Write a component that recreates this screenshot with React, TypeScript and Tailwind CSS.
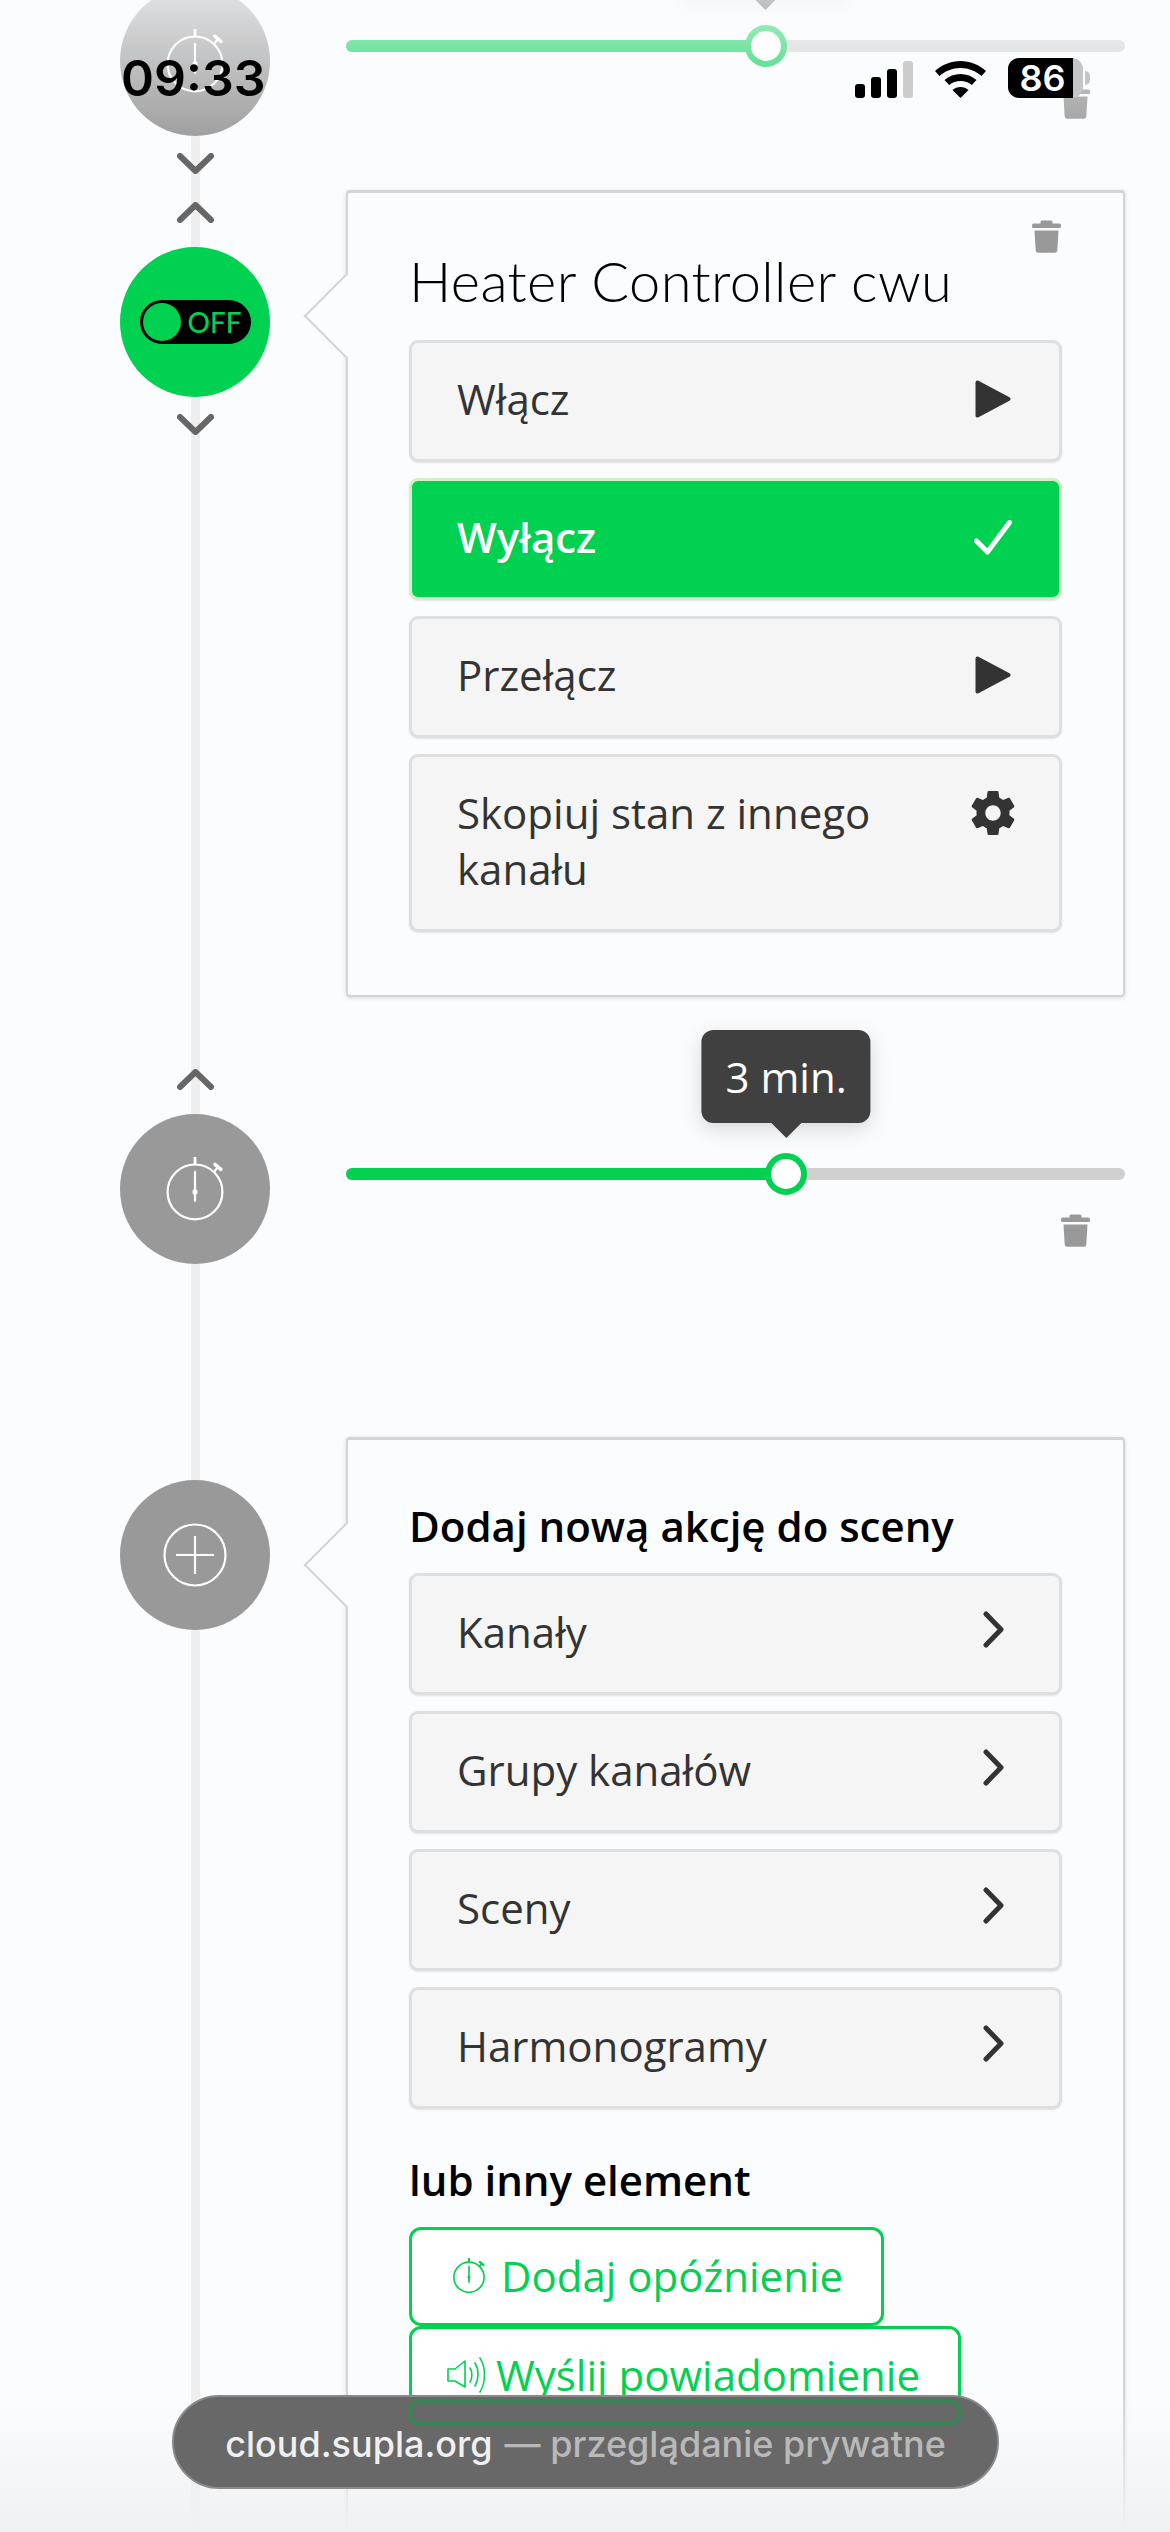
const sans = "font-['Open_Sans',sans-serif]";

function Chevron({ up = false }: { up?: boolean }) {
  return (
    <svg width="37" height="21" viewBox="0 0 37 21" fill="none" stroke="#666666" strokeWidth="6" strokeLinecap="round" strokeLinejoin="round" className="relative shrink-0">
      <polyline points={up ? "3 18 18.5 3 34 18" : "3 3 18.5 18 34 3"} />
    </svg>
  );
}

function Stopwatch({ size = 58, color = "#ffffff", width = 2.2 }: { size?: number; color?: string; width?: number }) {
  return (
    <svg width={size} height={size * 1.1} viewBox="0 0 58 64" fill="none" stroke={color} strokeWidth={width} strokeLinecap="round">
      <circle cx="29" cy="35" r="27.5" />
      <line x1="29" y1="1" x2="29" y2="7" strokeWidth={width + 0.6} />
      <line x1="29" y1="15" x2="29" y2="44" />
      <circle cx="29" cy="35" r="2.6" fill={color} stroke="none" />
      <line x1="48" y1="15" x2="52" y2="10" />
      <line x1="49" y1="7.5" x2="55" y2="12.5" strokeWidth={width + 1.4} />
    </svg>
  );
}

function Trash({ className = "" }: { className?: string }) {
  return (
    <svg width="29" height="33" viewBox="0 0 29 33" fill="#999999" className={className}>
      <path d="M10 0.5h9a1.5 1.5 0 0 1 1.5 1.5v1.5h6.5a2 2 0 0 1 2 2v1a1.5 1.5 0 0 1-1.5 1.5h-26a1.5 1.5 0 0 1-1.5-1.5v-1a2 2 0 0 1 2-2h6.500v-1.500a1.500 1.500 0 0 1 1.500-1.500z" />
      <path d="M2.500 10.500h24l-1.200 20a2.500 2.500 0 0 1-2.500 2.300h-16.600a2.500 2.500 0 0 1-2.500-2.300z" />
    </svg>
  );
}

function Play() {
  return (
    <svg width="36" height="38" viewBox="0 0 36 38" fill="#333333" stroke="#333333" strokeWidth="4" strokeLinejoin="round">
      <polygon points="2.500 2.500 33.500 19 2.500 35.500" />
    </svg>
  );
}

function Check() {
  return (
    <svg width="38" height="35" viewBox="0 0 38 35" fill="none" stroke="#ffffff" strokeWidth="5" strokeLinecap="round" strokeLinejoin="round">
      <polyline points="2.500 21 13.500 32 35.500 2.500" />
    </svg>
  );
}

function Gear() {
  return (
    <svg width="44" height="44" viewBox="2.500 2 19 20" fill="#333333">
      <path d="M19.430 12.980c.04-.32.07-.64.07-.98s-.03-.66-.07-.98l2.110-1.650c.19-.15.240-.42.120-.64l-2-3.460c-.12-.22-.39-.3-.61-.22l-2.490 1c-.52-.4-1.080-.73-1.690-.98l-.38-2.650C14.460 2.180 14.250 2 14 2h-4c-.25 0-.46.18-.49.42l-.38 2.650c-.61.25-1.170.59-1.690.98l-2.490-1c-.23-.09-.49 0-.61.22l-2 3.460c-.13.22-.07.49.12.64l2.110 1.650c-.04.32-.07.65-.07.98s.03.66.07.98l-2.110 1.650c-.19.15-.24.42-.12.64l2 3.460c.12.22.39.3.61.22l2.490-1c.52.4 1.080.73 1.690.98l.38 2.650c.03.24.24.42.49.42h4c.25 0 .46-.18.49-.42l.38-2.650c.61-.25 1.170-.59 1.690-.98l2.490 1c.23.09.49 0 .61-.22l2-3.460c.12-.22.07-.49-.12-.64l-2.110-1.650zM12 15.500c-1.930 0-3.500-1.570-3.500-3.500s1.570-3.500 3.500-3.500 3.500 1.570 3.500 3.500-1.570 3.500-3.500 3.500z" />
    </svg>
  );
}

function ChevronRight() {
  return (
    <svg width="21" height="37" viewBox="0 0 21 37" fill="none" stroke="#333333" strokeWidth="5" strokeLinecap="round" strokeLinejoin="round" className="-mt-[6px]">
      <polyline points="3 3 18 18.500 3 34" />
    </svg>
  );
}

function Speaker() {
  return (
    <svg width="38" height="36" viewBox="0 0 38 36" fill="none" stroke="#00d151" strokeWidth="1.600" strokeLinecap="round" strokeLinejoin="round">
      <polygon points="1 12 8 12 18 4 18 30 8 24 1 24" />
      <path d="M23 11c2.500 4 2.500 10 0 14" />
      <path d="M28 6c4 6.500 4 16 0 23" />
      <path d="M33 1c6 9 6 24 0 34" />
    </svg>
  );
}

function ActionButton({ label, icon, active = false }: { label: string; icon: React.ReactNode; active?: boolean }) {
  return (
    <div
      className={`flex items-start justify-between rounded-[9px] border-[3px] pb-[32px] pl-[45px] pr-[44px] pt-[28px] text-[42px] leading-[56px] shadow-[0_1px_2px_rgba(0,0,0,0.1)] ${
        active ? "border-[#d3efc9] bg-[#00d151] font-semibold text-white" : "border-[#dedfe0] bg-[#f5f5f5] text-[#333333]"
      }`}
    >
      <span className="w-[470px]">{label}</span>
      <span className="flex h-[56px] w-[44px] items-center justify-center">{icon}</span>
    </div>
  );
}

function Card({ notchTop, children }: { notchTop: string; children: React.ReactNode }) {
  return (
    <div className="relative w-[779px] rounded-[4px] border-2 border-t-[3px] border-[#d3d4d6] bg-[#fbfcfe] px-[61px] shadow-[0_1px_4px_rgba(0,0,0,0.15)]">
      <div className={`absolute left-[-32px] h-[60px] w-[60px] rotate-45 border-b-2 border-l-2 border-[#d3d4d6] bg-[#fbfcfe] ${notchTop}`} />
      <div className="relative">{children}</div>
    </div>
  );
}

function DelaySlider({ percent, label }: { percent: number; label: string }) {
  return (
    <div className="relative h-[12px] w-[779px] rounded-full bg-[#d0d0d0]">
      <div className="h-[12px] rounded-full bg-[#00d151]" style={{ width: `${percent}%` }} />
      <div className="absolute top-[-15px] h-[42px] w-[42px] -translate-x-1/2 rounded-full border-[6px] border-[#00d151] bg-white" style={{ left: `${percent}%` }} />
      <div className="absolute bottom-[42px] flex -translate-x-1/2 flex-col items-center" style={{ left: `${percent}%` }}>
        <div className="rounded-[12px] bg-[#404040] px-[24px] py-[18px] text-[42px] leading-[57px] whitespace-nowrap text-white shadow-[0_6px_20px_rgba(0,0,0,0.15)]">{label}</div>
        <div className="h-0 w-0 border-x-[15px] border-t-[15px] border-x-transparent border-t-[#404040]" />
      </div>
    </div>
  );
}

function Circle({ className = "", children }: { className?: string; children: React.ReactNode }) {
  return <div className={`relative flex h-[150px] w-[150px] shrink-0 items-center justify-center rounded-full ${className}`}>{children}</div>;
}

function OutlineButton({ icon, label, className }: { icon: React.ReactNode; label: string; className: string }) {
  return (
    <div className={`flex h-[99px] w-fit items-center rounded-[12px] border-[3px] border-[#00d151] bg-white pb-[2px] pr-[38px] text-[42px] text-[#00d151] ${className}`}>
      {icon}
      <span>{label}</span>
    </div>
  );
}

function StatusBar() {
  return (
    <div className="absolute left-0 top-[50px] flex h-[56px] w-[1170px] items-center justify-between pl-[121px] pr-[80px] text-black">
      <span className="font-['Inter',sans-serif] text-[50px] font-semibold leading-none">09:33</span>
      <div className="flex items-center">
        <svg width="58" height="37" viewBox="0 0 58 37" className="mt-[2px]">
          <rect x="0" y="23" width="10" height="14" rx="3" />
          <rect x="16" y="16" width="10" height="21" rx="3" />
          <rect x="32" y="8" width="10" height="29" rx="3" />
          <rect x="48" y="0" width="10" height="37" rx="3" fill="#cccccc" />
        </svg>
        <svg width="51" height="37" viewBox="0 0 51 37" className="ml-[22px] mt-[2px]">
          <path d="M25.500 0C16 0 7 3.700 0 10l4.500 5C10 10 17.500 7 25.500 7s15.500 3 21 8l4.500-5C44 3.700 35 0 25.500 0z" />
          <path d="M25.500 13c-6 0-11.500 2.200-16 6l4.700 5c3-2.600 7-4 11.300-4s8.300 1.400 11.300 4l4.700-5c-4.500-3.800-10-6-16-6z" />
          <path d="M25.500 26c-3 0-5.700 1-8 3l8 8 8-8c-2.300-2-5-3-8-3z" />
        </svg>
        <div className="relative ml-[22px] flex h-[40px] w-[75px] items-center overflow-hidden rounded-[11px] bg-[#c4c5c6] font-['Inter',sans-serif] text-[36px] font-semibold leading-none text-white">
          <div className="flex h-full w-[65px] items-center justify-center bg-black pl-[4px]">86</div>
        </div>
        <div className="ml-[2px] h-[14px] w-[5px] rounded-r-full bg-[#c4c5c6]" />
      </div>
    </div>
  );
}

export default function App() {
  return (
    <div className={`relative h-[2532px] w-[1170px] overflow-hidden bg-[#fbfcfe] ${sans}`}>
      <div className="absolute bottom-0 left-[191px] top-0 w-[9px] bg-[#eeeeee]" />

      <div className="relative -mt-[14px] pl-[120px]">
        {/* first delay, half hidden under the status bar */}
        <div className="flex h-[204px] gap-[76px]">
          <div className="flex w-[150px] flex-col items-center gap-[17px]">
            <Circle className="bg-[#999999]">
              <Stopwatch />
            </Circle>
            <Chevron />
          </div>
          <div className="flex flex-col pt-[54px]">
            <DelaySlider percent={53.9} label="3 min." />
            <Trash className="mr-[35px] mt-[34px] self-end" />
          </div>
        </div>

        {/* channel action */}
        <div className="flex h-[805px] gap-[76px]">
          <div className="flex w-[150px] flex-col items-center pt-[12px]">
            <Chevron up />
            <Circle className="mb-[17px] mt-[24px] bg-[#00d151]">
              <div className="flex h-[44px] w-[111px] items-center rounded-full bg-black pl-[3px]">
                <div className="h-[38px] w-[38px] rounded-full bg-[#00d151]" />
                <span className="ml-[7px] font-['Lato',sans-serif] text-[28px] font-medium leading-none text-[#00d151]">OFF</span>
              </div>
            </Circle>
            <Chevron />
          </div>
          <div className="h-[805px]">
            <Card notchTop="top-[93px]">
              <Trash className="absolute right-[1px] top-[27px]" />
              <div className="pb-[63px] pt-[56px]">
                <h2 className="mb-[27px] font-['Lato',sans-serif] text-[56px] font-light leading-[64px] tracking-[0.4px] text-black">Heater Controller cwu</h2>
                <div className="flex w-[653px] flex-col gap-[16px]">
                  <ActionButton label="Włącz" icon={<Play />} />
                  <ActionButton label="Wyłącz" icon={<Check />} active />
                  <ActionButton label="Przełącz" icon={<Play />} />
                  <ActionButton label="Skopiuj stan z innego kanału" icon={<Gear />} />
                </div>
              </div>
            </Card>
          </div>
        </div>

        {/* second delay */}
        <div className="flex h-[442px] gap-[76px]">
          <div className="flex w-[150px] flex-col items-center gap-[24px] pt-[74px]">
            <Chevron up />
            <Circle className="bg-[#999999]">
              <Stopwatch />
            </Circle>
          </div>
          <div className="flex flex-col pt-[173px]">
            <DelaySlider percent={56.5} label="3 min." />
            <Trash className="mr-[35px] mt-[34px] self-end" />
          </div>
        </div>

        {/* add new action */}
        <div className="flex gap-[76px]">
          <div className="w-[150px] pt-[43px]">
            <Circle className="bg-[#999999]">
              <svg width="64" height="64" viewBox="0 0 64 64" fill="none" stroke="#ffffff" strokeWidth="2.200">
                <circle cx="32" cy="32" r="30.500" />
                <line x1="13" y1="32" x2="51" y2="32" />
                <line x1="32" y1="13" x2="32" y2="51" />
              </svg>
            </Circle>
          </div>
          <Card notchTop="top-[95px]">
            <div className="h-[1092px] pt-[58px]">
              <h3 className="mb-[19px] text-[42px] font-semibold leading-[56px] text-black">Dodaj nową akcję do sceny</h3>
              <div className="flex w-[653px] flex-col gap-[16px]">
                {["Kanały", "Grupy kanałów", "Sceny", "Harmonogramy"].map((name) => (
                  <ActionButton key={name} label={name} icon={<ChevronRight />} />
                ))}
              </div>
              <h3 className="mb-[19px] mt-[43px] text-[42px] font-semibold leading-[56px] text-black">lub inny element</h3>
              <OutlineButton icon={<Stopwatch size={32} color="#00d151" width={3} />} label="Dodaj opóźnienie" className="gap-[16px] pl-[41px]" />
              <OutlineButton icon={<Speaker />} label="Wyślij powiadomienie" className="gap-[11px] pl-[35px]" />
            </div>
          </Card>
        </div>
      </div>

      {/* browser chrome on top of the page */}
      <div className="absolute left-0 top-0 h-[150px] w-[1170px] bg-gradient-to-b from-[#fbfcfe]/70 to-transparent" />
      <div className="absolute bottom-0 left-0 h-[130px] w-[1170px] bg-gradient-to-b from-transparent to-[#f0f1f3]" />
      <StatusBar />
      <div className="absolute left-[172px] top-[2395px] flex h-[94px] w-[827px] items-center justify-center overflow-hidden rounded-full border-2 border-[#8a8a8a] bg-[#686868] font-['Inter',sans-serif] text-[36px] font-medium">
        <div className="absolute left-[235px] top-[3px] h-[25px] w-[552px] rounded-[10px] border-[3px] border-[#23934e] blur-[1px]" />
        <span className="relative top-[2px] text-[#f0f0f0]">cloud.supla.org</span>
        <span className="relative top-[2px] ml-[12px] text-[#b9b9b9]">— przeglądanie prywatne</span>
      </div>
    </div>
  );
}
